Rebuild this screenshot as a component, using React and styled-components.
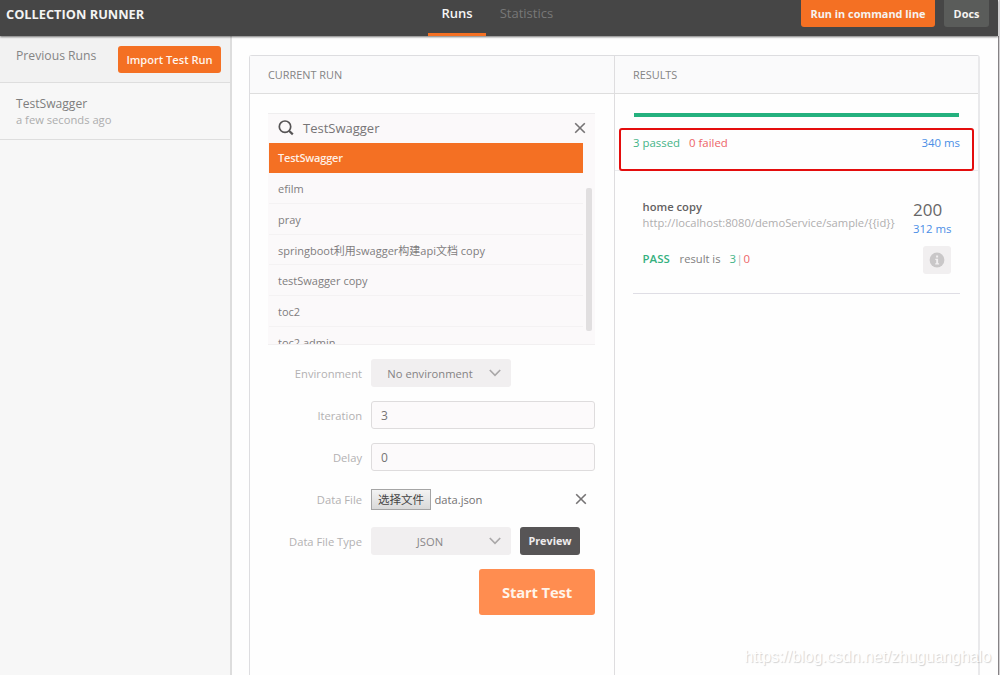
import React from 'react';
import styled, { createGlobalStyle } from 'styled-components';

const collections = [
  'efilm',
  'pray',
  'springboot利用swagger构建api文档 copy',
  'testSwagger copy',
  'toc2',
  'toc2 admin',
];

function CloseIcon() {
  return (
    <svg width="12" height="12" viewBox="0 0 12 12" fill="none" stroke="#757374" strokeWidth="1.6">
      <path d="M1.2 1.2l9.6 9.6M10.8 1.2l-9.6 9.6" />
    </svg>
  );
}

function SearchIcon() {
  return (
    <svg width="16" height="16" viewBox="0 0 16 16" fill="none" stroke="#565455">
      <circle cx="7" cy="6.7" r="5.7" strokeWidth="1.7" />
      <path d="M11 10.8l3.8 3.6" strokeWidth="2.2" />
    </svg>
  );
}

function ChevronIcon() {
  return (
    <svg width="12" height="8" viewBox="0 0 12 8" fill="none" stroke="#aaa8a9" strokeWidth="1.7">
      <path d="M0.8 1l5.2 5.3L11.2 1" />
    </svg>
  );
}

function InfoIcon() {
  return (
    <svg width="16" height="16" viewBox="0 0 16 16">
      <circle cx="8" cy="8" r="7.4" fill="#c9c7c8" />
      <path d="M6.3 6.8h2.8v4.4h1v1.3H6.2v-1.3h1V8.1h-.9zM7.1 3.5h2v2h-2z" fill="#f1eff0" />
    </svg>
  );
}

function App() {
  return (
    <Window>
      <GlobalStyle />
      <Header>
        <Title>COLLECTION RUNNER</Title>
        <Tabs>
          <Tab $active>Runs</Tab>
          <Tab>Statistics</Tab>
        </Tabs>
        <HeaderActions>
          <HeaderButton $width={134} $primary>
            Run in command line
          </HeaderButton>
          <HeaderButton $width={45}>Docs</HeaderButton>
        </HeaderActions>
      </Header>
      <Body>
        <Sidebar>
          <SidebarHead>
            <SidebarTitle>Previous Runs</SidebarTitle>
            <ImportButton>Import Test Run</ImportButton>
          </SidebarHead>
          <RunItem>
            <RunName>TestSwagger</RunName>
            <RunTime>a few seconds ago</RunTime>
          </RunItem>
        </Sidebar>
        <Main>
          <CurrentRun>
            <ColumnHead>CURRENT RUN</ColumnHead>
            <Picker>
              <SearchRow>
                <SearchIcon />
                <SearchText>TestSwagger</SearchText>
                <CloseIcon />
              </SearchRow>
              <List>
                <SelectedItem>TestSwagger</SelectedItem>
                {collections.map((name) => (
                  <ListItem key={name}>{name}</ListItem>
                ))}
                <ScrollThumb />
              </List>
            </Picker>
            <Form>
              <Label>Environment</Label>
              <Select $color="#858384">
                <span>No environment</span>
                <ChevronIcon />
              </Select>
              <Label>Iteration</Label>
              <Input>3</Input>
              <Label>Delay</Label>
              <Input>0</Input>
              <Label>Data File</Label>
              <FileRow>
                <FileButton>选择文件</FileButton>
                <FileName>data.json</FileName>
                <CloseIcon />
              </FileRow>
              <Label>Data File Type</Label>
              <TypeRow>
                <Select>
                  <span>JSON</span>
                  <ChevronIcon />
                </Select>
                <PreviewButton>Preview</PreviewButton>
              </TypeRow>
            </Form>
            <StartButton>Start Test</StartButton>
          </CurrentRun>
          <Results>
            <ColumnHead>RESULTS</ColumnHead>
            <Summary>
              <Progress />
              <Totals>
                <Passed>3 passed</Passed>
                <Failed>0 failed</Failed>
                <Duration>340 ms</Duration>
              </Totals>
              <Highlight />
            </Summary>
            <Result>
              <Request>
                <RequestName>home copy</RequestName>
                <RequestUrl>{'http://localhost:8080/demoService/sample/{{id}}'}</RequestUrl>
                <TestRow>
                  <Pass>PASS</Pass>
                  <TestName>result is</TestName>
                  <Passed>3</Passed>
                  <Bar>|</Bar>
                  <Failed>0</Failed>
                </TestRow>
              </Request>
              <Response>
                <Status>200</Status>
                <Duration>312 ms</Duration>
                <InfoButton>
                  <InfoIcon />
                </InfoButton>
              </Response>
            </Result>
          </Results>
        </Main>
      </Body>
      <Watermark>https://blog.csdn.net/zhuguanghalo</Watermark>
    </Window>
  );
}

const GlobalStyle = createGlobalStyle`
  * {
    box-sizing: border-box;
  }

  body {
    margin: 0;
    overflow: hidden;
    font-family: 'Open Sans', 'Noto Sans CJK SC', sans-serif;
    font-size: 11.4px;
    color: #7f7d7e;
  }
`;

const Window = styled.div`
  position: relative;
  display: flex;
  flex-direction: column;
  width: 1000px;
  height: 675px;
  overflow: hidden;
  white-space: nowrap;
  background: #fefefe;
  border-right: 1px solid #d2d0d2;
`;
const Header = styled.header`
  display: grid;
  grid-template-columns: 428px 1fr auto;
  flex: none;
  height: 36px;
  margin-right: 1px;
  background: #464646;
  box-shadow: 0 1px 2px rgba(0, 0, 0, 0.55);
  z-index: 1;
`;
const Title = styled.h1`
  margin: 0;
  padding-left: 6px;
  font-size: 12.8px;
  font-weight: 700;
  line-height: 28px;
  color: #f3f3f3;
`;
const Tabs = styled.nav`
  display: flex;
`;
const Tab = styled.div`
  height: 36px;
  padding: 0 13.5px;
  font-size: 13px;
  line-height: 27px;
  font-weight: ${({ $active }) => ($active ? 600 : 400)};
  color: ${({ $active }) => ($active ? '#f5f5f5' : '#787878')};
  border-bottom: ${({ $active }) => ($active ? '3px solid #f47023' : 'none')};
`;
const HeaderActions = styled.div`
  display: flex;
  gap: 9px;
  padding-right: 9px;
`;
const HeaderButton = styled.button`
  width: ${({ $width }) => $width}px;
  height: 27px;
  padding: 0;
  border: 0;
  border-radius: 0 0 3px 3px;
  font: 700 10.9px/27px 'Open Sans', sans-serif;
  white-space: nowrap;
  color: #f6f3f1;
  background: ${({ $primary }) => ($primary ? '#f47023' : '#5a5c5a')};
`;
const Body = styled.div`
  display: flex;
  flex: 1;
  border-right: 1px solid #858285;
`;
const Sidebar = styled.aside`
  width: 232px;
  background: #f7f7f7;
  border-right: 2px solid #dddddd;
`;
const SidebarHead = styled.div`
  display: flex;
  justify-content: space-between;
  height: 47px;
  padding: 10px 9px 0 16px;
  background: #f2f2f2;
  border-bottom: 1px solid #dedede;
`;
const SidebarTitle = styled.div`
  font-size: 12.2px;
  line-height: 19px;
  color: #858585;
`;
const ImportButton = styled.button`
  width: 103px;
  height: 27px;
  padding: 0;
  border: 0;
  border-radius: 3px;
  font: 600 11.1px/27px 'Open Sans', sans-serif;
  color: #fff5ee;
  background: #f47023;
`;
const RunItem = styled.div`
  height: 57px;
  padding: 12px 16px 0;
  border-bottom: 1px solid #dedede;
`;
const RunName = styled.div`
  font-size: 12.1px;
  line-height: 18px;
  color: #7e7e7e;
`;
const RunTime = styled.div`
  font-size: 11.2px;
  line-height: 14px;
  color: #adadad;
`;
const Main = styled.main`
  display: flex;
  width: 731px;
  margin: 19px 0 0 17px;
  border: 1px solid #dddde0;
  border-bottom: 0;
  border-right: 2px solid #e9e9eb;
  border-radius: 3px 3px 0 0;
`;
const CurrentRun = styled.section`
  width: 365px;
  border-right: 1px solid #dedddf;
`;
const Results = styled.section`
  flex: 1;
`;
const ColumnHead = styled.h2`
  height: 38px;
  margin: 0;
  padding-left: 18px;
  font-size: 10.9px;
  font-weight: 400;
  line-height: 38px;
  color: #848484;
  background: #fafafb;
  border-bottom: 1px solid #dedede;
`;
const Picker = styled.div`
  height: 232px;
  margin: 19px 19px 0 18px;
  background: #fbf9fa;
  border-top: 1px solid #efeeef;
  border-bottom: 1px solid #f2f0f1;
`;
const SearchRow = styled.div`
  display: flex;
  align-items: center;
  height: 29px;
  padding: 0 9px 2px 10px;
`;
const SearchText = styled.span`
  flex: 1;
  padding-left: 9px;
  font-size: 13px;
  color: #777576;
`;
const List = styled.div`
  position: relative;
  height: 201px;
  padding: 0 12px 0 1px;
  overflow: hidden;
`;
const SelectedItem = styled.div`
  height: 30px;
  padding-left: 9px;
  font-size: 11px;
  font-weight: 600;
  letter-spacing: -0.2px;
  line-height: 30px;
  color: #ffefe4;
  background: #f47023;
`;
const ListItem = styled.div`
  height: 30.8px;
  padding-left: 9px;
  font-size: 11px;
  line-height: 31px;
  border-bottom: 1px solid #f4f2f3;
`;
const ScrollThumb = styled.div`
  position: absolute;
  top: 45px;
  right: 3px;
  width: 6px;
  height: 143px;
  border-radius: 2px;
  background: #e1dfe0;
`;
const Form = styled.div`
  display: grid;
  grid-template-columns: 94px 224px;
  grid-auto-rows: 28px;
  column-gap: 9px;
  row-gap: 14px;
  align-items: center;
  margin: 14px 0 0 18px;
`;
const Label = styled.label`
  font-size: 11.2px;
  text-align: right;
  color: #b3b1b2;
`;
const Select = styled.div`
  display: flex;
  align-items: center;
  width: 140px;
  height: 28px;
  padding-right: 10px;
  border-radius: 3px;
  font-size: 11.2px;
  color: ${({ $color }) => $color || '#8a8889'};
  background: #f1eff0;

  span {
    flex: 1;
    text-align: center;
  }
`;
const Input = styled.div`
  height: 28px;
  padding-left: 9px;
  font-size: 12px;
  line-height: 27px;
  color: #757374;
  background: #fcfafb;
  border: 1px solid #dedcdd;
  border-radius: 3px;
`;
const FileRow = styled.div`
  display: flex;
  align-items: center;
  padding-right: 8px;
`;
const FileButton = styled.button`
  width: 60px;
  height: 21px;
  padding: 0;
  font: 11.5px/17px 'Noto Sans CJK SC', sans-serif;
  color: #444;
  background: linear-gradient(#f3f3f3, #d9d9d9);
  border: 1px solid #a5a5a5;
`;
const FileName = styled.span`
  flex: 1;
  padding: 1px 0 0 3.5px;
  font-size: 11.2px;
  color: #737172;
`;
const TypeRow = styled.div`
  display: flex;
  gap: 9px;
`;
const PreviewButton = styled.button`
  width: 60px;
  height: 28px;
  padding: 0;
  border: 0;
  border-radius: 3px;
  font: 700 10.8px/28px 'Open Sans', sans-serif;
  color: #eeeced;
  background: #575556;
`;
const StartButton = styled.button`
  display: block;
  width: 116px;
  height: 46px;
  margin: 14px 19px 0 auto;
  padding: 0;
  border: 0;
  border-radius: 3px;
  font: 700 14.8px/46px 'Open Sans', sans-serif;
  letter-spacing: -0.15px;
  color: #fff4ea;
  background: #ff8d50;
`;
const Summary = styled.div`
  position: relative;
  height: 77px;
  padding: 19px 18px 0 18px;
  border-bottom: 1px solid #ececee;
`;
const Progress = styled.div`
  height: 4px;
  margin: 0 1px;
  background: #24b17e;
`;
const Totals = styled.div`
  display: flex;
  gap: 9px;
  margin-top: 17px;
  line-height: 17px;

  & > :last-child {
    margin-left: auto;
  }
`;
const Highlight = styled.div`
  position: absolute;
  top: 34px;
  left: 4px;
  width: 355px;
  height: 43px;
  border: 2px solid #e40d0d;
  border-radius: 3px;
`;
const Passed = styled.span`
  color: #45b488;
`;
const Failed = styled.span`
  color: #ed6467;
`;
const Duration = styled.span`
  color: #4b8ee6;
`;
const Result = styled.div`
  display: flex;
  justify-content: space-between;
  height: 123px;
  margin: 0 18px;
  padding: 28px 8px 0 9.6px;
  border-bottom: 1px solid #dfdee5;
`;
const Request = styled.div`
  line-height: 16px;
`;
const RequestName = styled.div`
  font-size: 11.2px;
  font-weight: 600;
  color: #636162;
`;
const RequestUrl = styled.div`
  font-size: 11.2px;
  line-height: 15px;
  color: #b0aeaf;
`;
const TestRow = styled.div`
  display: flex;
  margin-top: 21px;
`;
const Pass = styled.span`
  width: 37px;
  font-weight: 600;
  color: #35b17e;
`;
const TestName = styled.span`
  width: 50px;
  font-size: 11.2px;
  color: #817f80;
`;
const Bar = styled.span`
  margin: 0 0.5px;
  color: #bbb;
`;
const Response = styled.div`
  display: flex;
  flex-direction: column;
  width: 39px;
`;
const Status = styled.div`
  font-size: 17px;
  line-height: 22px;
  color: #686667;
`;
const InfoButton = styled.div`
  display: flex;
  align-items: center;
  justify-content: center;
  align-self: flex-end;
  width: 28px;
  height: 28px;
  margin: 10px 1.5px 0 0;
  border-radius: 3px;
  background: #f1eff0;
`;
const Watermark = styled.div`
  position: absolute;
  right: 8px;
  bottom: 8px;
  font: 15.9px/20px 'Liberation Sans', sans-serif;
  color: #fff;
  text-shadow: 1px 1px 1px rgba(0, 0, 0, 0.18);
`;

export default App;
